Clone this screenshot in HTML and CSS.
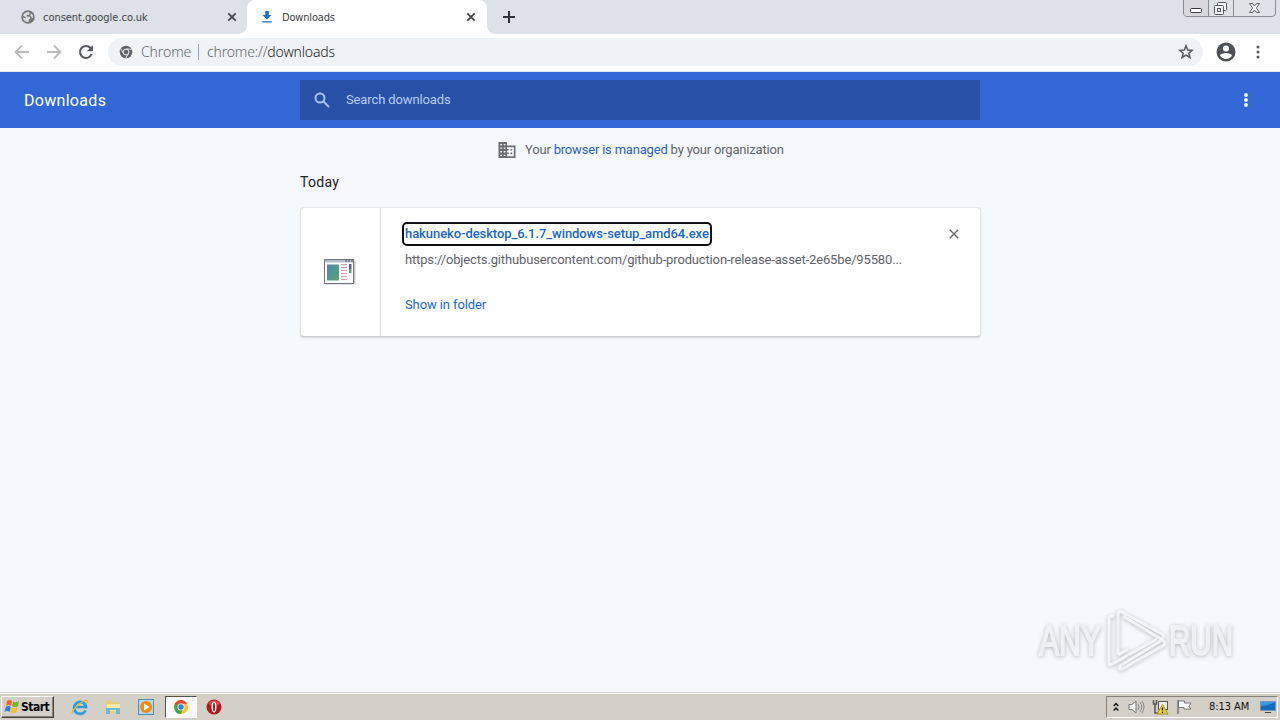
FILE: index.html
```html
<!DOCTYPE html>
<html lang="en">
<head>
<meta charset="utf-8">
<title>Downloads</title>
<link rel="stylesheet" href="styles.css">
</head>
<body>
<div class="screen">
  <div class="tabstrip">
    <div class="tab tab-idle">
      <svg class="favicon" viewBox="0 0 14 14"><circle cx="7" cy="7" r="6.8" fill="#757679"/><path d="M2 5.6C3 3 5 1.8 8 2L8.8 3.4 7.6 4.7 6 5 5.6 6.4 8.7 6.7 9.5 8.4 8 9.5 7.3 12.2C4 12 2 10 2 7.2L4.2 8.4 5 7.6ZM9.8 3.2L12 5.2 12.1 8 10.7 7.4 9.3 5.5Z" fill="#d9dbde"/></svg>
      <span class="tab-title title-consent">consent.google.co.uk</span>
      <svg class="tab-close" viewBox="0 0 10 10"><path d="M1.3 1.3L8.7 8.7M8.7 1.3L1.3 8.7"/></svg>
    </div>
    <div class="tab tab-active">
      <svg class="favicon" viewBox="0 0 14 14"><path d="M5.2 1H8.8V5H11.5L7 9.6 2.5 5H5.2ZM2.2 11.2H11.8V12.6H2.2Z" fill="#1a6fd0"/></svg>
      <span class="tab-title">Downloads</span>
      <svg class="tab-close" viewBox="0 0 10 10"><path d="M1.3 1.3L8.7 8.7M8.7 1.3L1.3 8.7"/></svg>
    </div>
    <svg class="new-tab" viewBox="0 0 12 12"><path d="M6 0V12M0 6H12"/></svg>
    <svg class="window-buttons" viewBox="0 0 94 18"><path d="M.5 0V13Q.5 16.500 4 16.500H89Q92.500 16.500 92.500 13V0" fill="#dfe1e6" stroke="#888a91"/><path d="M1 0H25V16H4Q1 16 1 13Z" fill="#d8d8dc"/><path d="M25.500 0V16M50.500 0V16" stroke="#888a91"/><rect x="7.500" y="8.500" width="11" height="4" rx="1" fill="#fff" stroke="#3b3d43"/><rect x="34.500" y="2.500" width="9" height="8" rx="1" fill="#f4f4f6" stroke="#55575d"/><rect x="31.500" y="5.500" width="9" height="9" rx="1" fill="#f4f4f6" stroke="#55575d"/><rect x="34.500" y="8.500" width="3" height="3" fill="none" stroke="#55575d"/><path d="M66.500 3.500H69.500L71.500 6 73.500 3.500H76.500L73.300 8 76.500 12.500H73.500L71.500 10 69.500 12.500H66.500L69.700 8Z" fill="#f4f4f6" stroke="#65676d"/></svg>
  </div>

  <div class="toolbar">
    <svg class="nav-icon nav-off" viewBox="0 0 16 16"><path d="M15 8H2M8 1.500L1.500 8 8 14.500"/></svg>
    <svg class="nav-icon nav-off" viewBox="0 0 16 16"><path d="M1 8H14M8 1.500L14.500 8 8 14.500"/></svg>
    <svg class="nav-icon nav-reload" viewBox="0 0 16 16"><path d="M13.600 10A6 6 0 1 1 12.500 4L14 5.500"/><path class="solid" d="M15 1V7.200H8.800Z"/></svg>
    <div class="omnibox">
      <svg class="site-icon" viewBox="0 0 14 14"><circle cx="7" cy="7" r="6.300" fill="#5f6368"/><circle cx="7" cy="7" r="2.900" fill="none" stroke="#eef1f4"/><path d="M7 4.100H13M4.500 8.500L1.500 3.400M9.500 8.500L6.600 13.300" stroke="#eef1f4" stroke-width=".9"/></svg>
      <span class="scheme-name">Chrome</span>
      <span class="omni-divider"></span>
      <span class="url">chrome://<b>downloads</b></span>
      <svg class="star" viewBox="0 0 16 16"><path d="M8 1.700L9.700 6 14.300 6.300 10.800 9.200 12 13.700 8 11.200 4 13.700 5.200 9.200 1.700 6.300 6.300 6Z"/></svg>
    </div>
    <svg class="profile" viewBox="0 0 20 20"><circle cx="10" cy="10" r="9.500" fill="#4e5156"/><circle cx="10" cy="6.500" r="3" fill="#fff"/><path d="M4 13.800C4 11.800 8 10.900 10 10.900S16 11.800 16 13.800C14.700 15.700 12.500 16.900 10 16.900S5.300 15.700 4 13.800Z" fill="#fff"/></svg>
    <svg class="menu-dots" viewBox="0 0 4 14"><circle cx="2" cy="2" r="1.500"/><circle cx="2" cy="7" r="1.500"/><circle cx="2" cy="12" r="1.500"/></svg>
  </div>

  <div class="header">
    <h1 class="page-title">Downloads</h1>
    <div class="search">
      <svg class="search-icon" viewBox="0 0 16 16"><circle cx="6" cy="6" r="4.500"/><path d="M9.500 9.500L15 15"/></svg>
      <span class="search-text">Search downloads</span>
    </div>
    <svg class="header-dots" viewBox="0 0 4 14"><circle cx="2" cy="2" r="1.900"/><circle cx="2" cy="7" r="1.900"/><circle cx="2" cy="12" r="1.900"/></svg>
  </div>

  <div class="content">
    <div class="managed">
      <svg class="building" viewBox="0 0 18 16"><path fill="#6a6d71" fill-rule="evenodd" d="M.5 0H9V3.500H17.500V16H.5ZM2.300 2V3.300H4V2ZM5.700 2V3.300H7.400V2ZM2.300 5.500V6.800H4V5.500ZM5.700 5.500V6.800H7.400V5.500ZM2.300 9V10.400H4V9ZM5.700 9V10.400H7.400V9ZM2.300 12.700V14H4V12.700ZM5.700 12.700V14H7.400V12.700ZM9 5.200V7H10.700V8.600H9V10.600H10.700V12.200H9V14.300H15.800V5.200ZM12.500 7H14.200V8.600H12.500ZM12.500 10.600H14.200V12.200H12.500Z"/></svg>
      <span class="managed-text">Your <a class="link">browser is managed</a> by your organization</span>
    </div>
    <h2 class="date">Today</h2>
    <div class="card">
      <div class="file-cell">
        <svg class="file-icon" viewBox="0 0 32 26"><rect x="1.500" y="1.500" width="30" height="24" fill="#c9cbcf"/><rect x=".5" y=".5" width="29" height="24" fill="#fff" stroke="#74767f"/><path d="M1 1H29V3.500H1Z" fill="#b8bec9"/><path d="M21 2H23M24 2H26M27 2H29" stroke="#555b6a"/><defs><linearGradient id="photo" x2="1" y2="1"><stop stop-color="#607da5"/><stop offset=".5" stop-color="#4e9a91"/><stop offset="1" stop-color="#67a06b"/></linearGradient></defs><rect x="3" y="5.500" width="12" height="16" fill="url(#photo)"/><path d="M17 5.500H23M17 8.500H23M17 11.500H23M17 14.500H23M17 17.500H23M17 20.500H23" stroke="#d3a2a8"/><path d="M25 5H27.500V10H25Z" fill="#4b6681"/><path d="M25 10H27.500V14H25Z" fill="#54a078"/></svg>
      </div>
      <div class="details">
        <a class="file-name">hakuneko-desktop_6.1.7_windows-setup_amd64.exe</a>
        <span class="file-url">https://objects.githubusercontent.com/github-production-release-asset-2e65be/95580...</span>
        <a class="show-folder">Show in folder</a>
      </div>
      <svg class="remove" viewBox="0 0 10 10"><path d="M.8 .8L9.200 9.200M9.200 .8L.8 9.200"/></svg>
    </div>
    <svg class="watermark" viewBox="0 0 245 74">
      <g class="mark-text"><text x="9" y="47.500" textLength="62" lengthAdjust="spacingAndGlyphs">ANY</text><text x="139" y="47.500" textLength="64" lengthAdjust="spacingAndGlyphs">RUN</text></g>
      <g class="mark-outline"><path d="M84 9H81Q79 9 79 12V56Q79 59 82 57L127 32"/><path d="M88 48V7Q88 3 92 5L132 27Q136 30 131 32L93 9"/><path d="M88 48L98 42M90 59Q88 63 92 62L134 38Q136 35 132 33Z"/></g>
    </svg>
  </div>

  <div class="taskbar">
    <div class="start">
      <svg class="flag" viewBox="0 0 16 16"><path d="M3 2Q6 0 8 2L7 7Q4 5 2 7Z" fill="#ed642d"/><path d="M9 2.500Q12 4 15 2L14 7Q11 9 8 7Z" fill="#76b82a"/><path d="M1.800 8Q4 6 6.800 8L5.600 13Q3 11 .5 13Z" fill="#2b7bcf"/><path d="M7.800 8.500Q11 10 13.600 8L12.500 13Q10 15 6.600 13Z" fill="#f8bd27"/></svg>
      <span class="start-text">Start</span>
    </div>
    <div class="launchers">
      <svg class="launcher" viewBox="0 0 18 18"><path d="M14.500 12.500A6 6 0 1 1 15 9H5" fill="none" stroke="#299bdc" stroke-width="2.700"/><path d="M1.500 15.500C-.5 12 14 .5 16.500 2.800Q17 3.500 16 5.500" fill="none" stroke="#e5b83b" stroke-width="1.400"/></svg>
      <svg class="launcher" viewBox="0 0 18 18"><path d="M2 3L7 2 8 4H15V15H2Z" fill="#e7ce71"/><path d="M3 6H16V13H3Z" fill="#f8e9a7"/><path d="M2 10H16V16H12V12H6V16H2Z" fill="#72b8d5"/></svg>
      <svg class="launcher" viewBox="0 0 18 18"><rect x="1.500" y="1.500" width="15" height="15" fill="#b9d7ed" stroke="#4c8dbe"/><circle cx="9" cy="9" r="6" fill="#f18a13"/><path d="M7 5.500L12.500 9 7 12.500Z" fill="#fff"/></svg>
      <div class="running"><svg class="chrome-icon" viewBox="0 0 16 16"><circle cx="8" cy="8" r="7" fill="#f7c51e"/><path d="M8 8H1L2 4.500Q4 1 8 1T14.200 4.800H8Z" fill="#e44b37"/><path d="M8 8L2 4.500Q.3 8 2 11.500T7.500 15L10.500 9.500Z" fill="#3fa255"/><circle cx="8" cy="8" r="3.500" fill="#fff"/><circle cx="8" cy="8" r="2.700" fill="#367cdf"/></svg></div>
      <svg class="launcher opera" viewBox="0 0 18 18"><circle cx="9" cy="9" r="7.500" fill="#ad1a20"/><path d="M3 6A7 7 0 0 1 15 6Q9 9 3 6" fill="#d84b4b"/><ellipse cx="9" cy="9" rx="2.500" ry="5.500" fill="#fff"/><ellipse cx="9" cy="9" rx="1" ry="4.500" fill="#9d1a20"/></svg>
    </div>
    <div class="tray">
      <svg class="chevrons" viewBox="0 0 6 10"><path d="M.7 4L3 1.500 5.300 4M.7 8.500L3 6 5.300 8.500"/></svg>
      <svg class="tray-icon" viewBox="0 0 17 16"><path d="M1 5.500H4L8 2V14L4 10.500H1Z" fill="#fafafa" stroke="#777"/><path d="M10 5Q12 8 10 11M12 3Q15.500 8 12 13M14 2Q18 8 14 14" fill="none" stroke="#888"/></svg>
      <svg class="tray-icon" viewBox="0 0 17 16"><path d="M1.500 1V5H4.500V1M3 5V14H6" fill="none" stroke="#555" stroke-width="1.500"/><rect x="6.500" y="2.500" width="9" height="8" fill="#eee" stroke="#555"/><path d="M5 15L10.500 5.500 16 15Z" fill="#f4d52b" stroke="#a68d13"/><path d="M10.500 8.500V11.500M10.500 12.500V14" stroke="#222" stroke-width="1.300"/></svg>
      <svg class="tray-icon" viewBox="0 0 17 16"><path d="M2 1V15" stroke="#777" stroke-width="1.500"/><path d="M2.500 2H8.500V4H15L13 7.500 15 10H8V8.500H2.500Z" fill="#fafafa" stroke="#777"/></svg>
      <span class="clock">8:13 AM</span>
      <svg class="desktop" viewBox="0 0 16 14"><path d="M.5 1.500H15.500V10.500H.5Z" fill="#1769ba" stroke="#7195bb"/><path d="M1 6Q8 6 15 2V2H1Z" fill="#3c9be0"/><path d="M5 12.500H11" stroke="#444"/></svg>
    </div>
  </div>
</div>
</body>
</html>
```
FILE: styles.css
```css
* { box-sizing: border-box; }
body { margin: 0; overflow: hidden; }
svg { display: block; flex: none; }
.screen { width: 1280px; height: 720px; display: flex; flex-direction: column; background: #f6f9fc; font-family: Roboto, sans-serif; font-size: 13px; color: #5f6368; white-space: nowrap; }

.tabstrip { height: 34px; flex: none; display: flex; background: #dee1e7; }
.tab { height: 34px; display: flex; align-items: center; }
.tab-idle { width: 247px; padding: 0 10px 0 21px; border-radius: 0 0 8px 0; }
.tab-active { width: 240px; padding: 0 11px 0 13px; background: #fff; border-radius: 8px 8px 0 0; position: relative; }
.tab-active::before, .tab-active::after { content: ""; position: absolute; bottom: 0; width: 8px; height: 8px; }
.tab-active::before { left: -8px; background: radial-gradient(circle at 0 0, transparent 7.5px, #fff 8px); }
.tab-active::after { right: -8px; background: radial-gradient(circle at 100% 0, transparent 7.5px, #fff 8px); }
.favicon { width: 14px; height: 14px; }
.tab-title { margin-left: 8px; padding-top: 1px; flex: 1; font: 11px/16px "DejaVu Sans Condensed", "DejaVu Sans", sans-serif; font-stretch: condensed; color: #3c4043; letter-spacing: -.18px; }
.title-consent { letter-spacing: -.03px; }
.tab-close { width: 10px; height: 10px; fill: none; stroke: #43464b; stroke-width: 1.8; }
.new-tab { width: 12px; height: 12px; margin: 11px 0 0 16px; stroke: #303238; stroke-width: 2; }
.window-buttons { width: 94px; height: 18px; margin-left: auto; margin-right: 3px; }

.toolbar { height: 38px; flex: none; display: flex; align-items: center; padding: 0 20px 2px 14px; background: #fff; border-bottom: 1px solid #e2e5e9; }
.nav-icon { width: 16px; height: 16px; margin-right: 16px; fill: none; stroke-width: 1.8; }
.nav-off { stroke: #babcbe; }
.nav-reload { stroke: #55585d; stroke-width: 2; margin-right: 14px; }
.solid { fill: #55585d; stroke: none; }
.omnibox { width: 1095px; height: 28px; display: flex; align-items: center; padding: 0 9px 0 11px; border-radius: 14px; background: #f0f3f5; font: 14px/20px "Noto Sans", sans-serif; color: #62666b; }
.site-icon { width: 14px; height: 14px; margin-right: 8px; }
.scheme-name { width: 57px; font-weight: 300; letter-spacing: -.1px; }
.omni-divider { width: 1px; height: 16px; background: #999ca0; margin-right: 8px; }
.url { font-weight: 300; flex: 1; letter-spacing: -.17px; }
.url b { font-weight: 300; color: #202124; }
.star { width: 16px; height: 16px; fill: none; stroke: #55585d; stroke-width: 1.5; }
.profile { width: 20px; height: 20px; margin-left: 13px; }
.menu-dots { width: 4px; height: 14px; margin-left: auto; fill: #55585d; }

.header { height: 56px; flex: none; display: flex; align-items: center; padding: 0 32px 0 24px; background: #3367d6; }
.page-title { width: 276px; margin: 0; padding-top: 2px; font-size: 16px; line-height: 20px; font-weight: 400; letter-spacing: .3px; color: #fff; }
.search { width: 680px; height: 40px; display: flex; align-items: center; padding-left: 14px; background: #2850a7; }
.search-icon { width: 16px; height: 16px; fill: none; stroke: #a9c1ee; stroke-width: 2; }
.search-text { margin-left: 16px; padding-bottom: 2px; color: #b9cdf4; letter-spacing: -.12px; }
.header-dots { width: 4px; height: 14px; margin-left: auto; fill: #fff; }

.content { height: 564px; flex: none; padding: 14px 300px 0; position: relative; }
.managed { height: 16px; display: flex; align-items: center; padding-left: 198px; }
.building { width: 18px; height: 16px; }
.managed-text { margin-left: 9px; padding-bottom: 2px; letter-spacing: -.19px; }
.link { color: #2862bd; }
.date { margin: 14px 0 15px; font-size: 14px; line-height: 20px; font-weight: 400; letter-spacing: .3px; color: #202124; }
.card { width: 681px; height: 130px; display: flex; border: 1px solid #e4e6e9; border-bottom-color: #c8cbd0; border-radius: 4px; background: #fff; box-shadow: 0 1px 2px #0002; }
.file-cell { width: 80px; border-right: 1px solid #dadce0; display: flex; align-items: center; justify-content: center; padding-right: 2px; }
.file-icon { width: 32px; height: 26px; }
.details { width: 563px; padding: 17px 0 0 24px; display: flex; flex-direction: column; align-items: flex-start; }
.file-name { height: 18px; line-height: 18px; border-radius: 2px; outline: 2px solid #101114; outline-offset: 1px; font-weight: 500; color: #2066c8; letter-spacing: -.07px; }
.file-url { margin-top: 8px; height: 18px; line-height: 18px; letter-spacing: -.148px; }
.show-folder { margin-top: 27px; height: 18px; line-height: 18px; color: #2067c9; letter-spacing: -.1px; }
.remove { width: 10px; height: 10px; margin: 21px 0 0 5px; fill: none; stroke: #696c70; stroke-width: 1.4; }
.watermark { position: absolute; left: 1030px; top: 479px; width: 245px; height: 74px; filter: drop-shadow(0 1px 2px #999a); }
.mark-text { font: 400 43px "Liberation Sans Narrow", "Liberation Sans", sans-serif; fill: #eff1f2; stroke: #eff1f2; stroke-width: 2; }
.mark-outline { fill: none; stroke: #f3f4f5; stroke-width: 3; stroke-linejoin: round; }

.taskbar { height: 28px; flex: none; display: flex; align-items: center; padding: 2px 2px 2px 1px; background: #d4d0c8; border-top: 1px solid #d8d6d0; box-shadow: inset 0 1px #fff; }
.start { width: 53px; height: 22px; display: flex; align-items: center; padding-left: 2px; border: 1px solid; border-color: #fff #44413e #44413e #fff; box-shadow: inset -1px -1px #85817a; }
.flag { width: 16px; height: 16px; }
.start-text { margin-left: 1px; font: 700 12px/16px "DejaVu Sans Condensed", "DejaVu Sans", sans-serif; font-stretch: condensed; color: #000; letter-spacing: -.5px; }
.launchers { display: flex; align-items: center; padding-left: 17px; }
.launcher { width: 18px; height: 18px; margin-right: 15px; }
.running { width: 32px; height: 22px; display: flex; align-items: center; justify-content: center; margin-left: -5px; border: 1px solid; border-color: #55514c #fff #fff #55514c; background: #fafafa; }
.chrome-icon { width: 16px; height: 16px; }
.opera { margin-left: 8px; }
.tray { width: 172px; height: 22px; margin-left: auto; display: flex; align-items: center; padding-left: 6px; border: 1px solid; border-color: #85817a #fff #fff #85817a; }
.chevrons { width: 6px; height: 10px; margin-right: 9px; fill: none; stroke: #111; stroke-width: 1.4; }
.tray-icon { width: 17px; height: 16px; margin-right: 7px; }
.clock { width: 44px; margin-left: 9px; font: 11px/16px "DejaVu Sans Condensed", "DejaVu Sans", sans-serif; font-stretch: condensed; letter-spacing: -.05px; color: #111; }
.desktop { width: 16px; height: 14px; margin-left: 7px; }
```
